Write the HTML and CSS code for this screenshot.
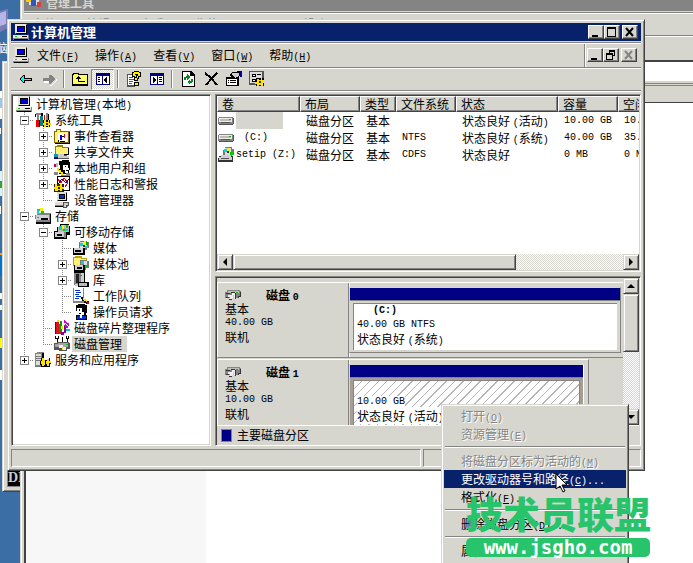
FILE: index.html
```html
<!DOCTYPE html>
<html lang="zh-CN">
<head>
    <meta charset="UTF-8">
    <meta name="viewport" content="width=device-width, initial-scale=1.0">
    <title>计算机管理</title>
    <link rel="stylesheet" href="styles.css">
</head>
<body>

    <!-- Icon set -->
    <svg class="defs" aria-hidden="true">
        <symbol id="i-computer" viewBox="0 0 16 16">
            <path fill="#848484" d="M2 0h12v10H2zM0 11h16v5H0z"/><path fill="#e7e7de" d="M2 0h11v9H2zM0 11h15v3H0z"/>
            <path fill="#000" d="M4 2h8v6H4zM13 1h1v9H3v-1h10zM1 15h14v1H1zM9 12h5v1H9z"/><path fill="#0000e8" d="M5 3h6v4H5z"/><path fill="#0c0" d="M2 12h2v1H2z"/>
        </symbol>
        <symbol id="i-tools" viewBox="0 0 16 16">
            <path fill="#848484" d="M1 1h5v2H1zM2 3h2v5H2zM11 1h2v7h-2z"/><path fill="#000" d="M0 2h1v3H0zM6 1h2v4H6zM13 2h1v6h-1v1H9V8h4z"/>
            <path fill="#008484" d="M5 4h3v10H5z"/><path fill="#e00" d="M1 8h3v7H1zM9 3h1v5H9z"/><path fill="#000" d="M4 8h1v7H4zM8 8h7v7H8z"/><path fill="#ffe000" d="M9 8h2v2h2V8h1v3h2v2h-2v2h-1v-1h-2v1H9v-2H8v-2h1z"/><path fill="#333" d="M11 11h2v2h-2z"/>
        </symbol>
        <symbol id="i-events" viewBox="0 0 16 16">
            <path fill="#846b00" d="M0 3h2V1h5v2h9v12H0z"/><path fill="#ffef73" d="M1 4h2V2h3v2h8v10H1z"/><path fill="#000" d="M15 4h1v12H1v-1h14z"/>
            <path fill="#fff" d="M4 5h9v9H4z"/><path fill="#00f" d="M6 7h2v5H6z"/><path fill="#e00" d="M10 6h1v4h-1z"/><path fill="#000" d="M4 12h1v2H4zM8 8h2v1H8zM6 13h5v1H6z"/>
        </symbol>
        <symbol id="i-share" viewBox="0 0 16 16">
            <path fill="#948400" d="M1 2h2V1h6v2h6v8H1z"/><path fill="#ffef73" d="M2 3h6v1h6v6H2z"/><path fill="#000" d="M14 4h1v7H6v-1h8z"/>
            <path fill="#009cb0" d="M0 10h4v4H0z"/><path fill="#000084" d="M0 13h4v2H0z"/><path fill="#ccc" d="M4 10h6v2h5v2H4z"/><path fill="#555" d="M4 14h11v1H4zM10 11h3v1h-3z"/>
        </symbol>
        <symbol id="i-users" viewBox="0 0 16 16">
            <path fill="#000" d="M5 1h3V0h7v2h1v8h-1v4H5V9h1V5H5z"/><path fill="#fff" d="M9 5h5v3h1v2h-1v3h-3v-3H9z"/><path fill="#000" d="M11 6h1v1h-1zM12 10h2v1h-2z"/>
            <path fill="#c00060" d="M0 4h2v3H0z"/><path fill="#bbb" d="M2 3h2v4H2z"/><path fill="#ffe000" d="M3 8h2v2h2v2h2v3H7v-2H5v-2H3z"/><path fill="#848484" d="M0 12h4v3H0zM12 13h4v3H7v-1h5z"/>
        </symbol>
        <symbol id="i-perf" viewBox="0 0 16 16">
            <path fill="#000" d="M3 0h13v15H3z"/><path fill="#fff" d="M4 1h11v13H4z"/><path fill="none" stroke="#e00" d="M4 3l3 4 3-5 4 5M11 11l3-4"/><path fill="none" stroke="#00c" d="M4 8l4-5 4 4 3-4"/>
            <path fill="#222" d="M0 8h10v8H0z"/><path fill="#ffe000" d="M1 8h2v2h3V8h2v3h2v2H8v2H6v-1H4v1H1v-2H0v-2h1z"/><path fill="#222" d="M4 11h2v2H4z"/>
        </symbol>
        <symbol id="i-device" viewBox="0 0 16 16">
            <path fill="#848484" d="M3 0h10v9H3zM1 10h13v5H1z"/><path fill="#deded6" d="M3 0h9v8H3zM1 10h12v3H1z"/><path fill="#000" d="M5 2h6v5H5zM12 1h1v8H4V8h8zM1 14h12v1H1z"/><path fill="#0031ce" d="M6 3h4v3H6z"/>
            <path fill="#555" d="M9 10h6v4h-2v2H9z"/><path fill="#ccc" d="M10 11h4v2h-2v2h-2z"/>
        </symbol>
        <symbol id="i-storage" viewBox="0 0 16 16">
            <path fill="#848484" d="M0 7h2V5h14v10H1z"/><path fill="#ceced6" d="M1 7h13v5H1z"/><path fill="#000" d="M1 14h14V6h1v10H1zM6 10h7v2H6z"/>
            <path fill="#848484" d="M2 1h6v5H2z"/><path fill="#00d8d8" d="M2 2h3v4H2z"/><path fill="#ffef00" d="M5 0h3v4H5z"/><path fill="#0c0" d="M6 3h3v3H6zM2 9h2v1H2z"/><path fill="#fff" d="M4 3h2v2H4z"/>
        </symbol>
        <symbol id="i-removable" viewBox="0 0 16 16">
            <path fill="#000" d="M0 7h3V3h3V0h9v2h1v9h-3v4H0z"/><path fill="#bbb" d="M4 3h3V1h8v7H4z"/><path fill="#00d8d8" d="M5 2h3v4H5zM11 5h3v2h-3z"/><path fill="#ffef00" d="M8 1h2v4H8z"/><path fill="#0c0" d="M9 5h2v2H9zM12 1h2v3h-2z"/>
            <path fill="#ceced6" d="M1 8h9v5H1z"/><path fill="#000" d="M3 10h5v2H3z"/><path fill="#848484" d="M10 8h2v6h-2z"/>
        </symbol>
        <symbol id="i-media" viewBox="0 0 16 16">
            <path fill="#777" d="M7 1h7v1h2v6h-2v2H6V2h1z"/><path fill="#ddd" d="M7 2h7v6H7z"/><path fill="#00d8d8" d="M7 3h3v3H7zM12 6h3v2h-3z"/><path fill="#ffef00" d="M11 1h2v4h-2z"/><path fill="#0a0" d="M13 2h2v3h-2z"/><path fill="#333" d="M10 5h2v2h-2z"/>
            <path fill="#000" d="M0 8h12v7H0z"/><path fill="#ceced6" d="M1 8h9v5H1z"/><path fill="#000" d="M2 10h6v2H2z"/>
        </symbol>
        <symbol id="i-pool" viewBox="0 0 16 16">
            <path fill="#b5a500" d="M0 1h2V0h7v2h5v8H0z"/><path fill="#ffef73" d="M1 2h7v1h5v6H1z"/><path fill="#777" d="M7 4h7v1h2v7h-3v2H7z"/><path fill="#00d8d8" d="M8 5h3v3H8z"/><path fill="#0c0" d="M12 9h3v3h-3z"/><path fill="#ddd" d="M11 5h3v4h-3z"/>
            <path fill="#000" d="M1 9h11v7H1z"/><path fill="#ceced6" d="M2 9h8v5H2z"/><path fill="#000" d="M4 11h5v2H4z"/>
        </symbol>
        <symbol id="i-library" viewBox="0 0 16 16">
            <path fill="#000" d="M1 0h11v13H1z"/><path fill="#848484" d="M1 1h7v12H1z"/><path fill="#222" d="M3 2h3v9H3z"/><path fill="#ceced6" d="M8 1h3v11H8zM2 12h6v2H2z"/><path fill="#0a0" d="M7 3h2v1H7z"/>
            <path fill="#000" d="M5 10h11v5H5z"/><path fill="#bbb" d="M6 11h8v3H6z"/>
        </symbol>
        <symbol id="i-queue" viewBox="0 0 16 16">
            <path fill="#848484" d="M0 0h11v15H0z"/><path fill="#fff" d="M1 0h9v13H1z"/><path fill="#0031ce" d="M2 2h5v1H2zM3 4h5v1H3zM2 6h4v1H2zM3 8h5v1H3zM2 10h4v1H2z"/><path fill="#000" d="M8 9h2v1h1v1h2v1h1v1h2v3h-3v-1h-2v-2H9v-2H8z"/><path fill="#ffe000" d="M10 10h1v1h2v1h1v2h-1v-1h-2v-1h-1z"/><path fill="#e00" d="M14 14h2v2h-2z"/>
        </symbol>
        <symbol id="i-operator" viewBox="0 0 16 16">
            <path fill="#000" d="M3 1h2V0h7v1h2v8h-1v2h1v5H3v-5h2V7H3z"/><path fill="#fff" d="M4 4h5v4h2v3H5V8H4z"/><path fill="#000" d="M6 5h1v2H6zM6 9h2v1H6z"/><path fill="#0031ce" d="M4 12h9v3H4z"/><path fill="#fff" d="M7 11h2v3H7z"/>
        </symbol>
        <symbol id="i-defrag" viewBox="0 0 16 16">
            <path fill="#840000" d="M1 2h4v12H1z"/><path fill="#e01020" d="M2 2h3v9H2zM2 11h5v3H2z"/><path fill="#00a000" d="M5 4h3v8H5zM6 1h2v3H6z"/><path fill="#ffe000" d="M7 6h2v3H7zM3 0h2v2H3z"/><path fill="#00c6ce" d="M12 9h4v2h-4z"/><path fill="#8000a0" d="M10 6h2v7h-2zM7 12h3v3H7z"/><path fill="none" stroke="#d000d0" stroke-width="2" d="M10 1l5 4M11 5l3 3"/>
        </symbol>
        <symbol id="i-diskmgmt" viewBox="0 0 16 16">
            <path fill="#000" d="M1 0h1v2h2V0h1v3H4v3H3V3H1zM8 1h1v5H8zM12 0h1v2h1V0h1v3h-1v3h-1V3h-1z"/><path fill="#555" d="M0 7h3V6h12v1h1v6h-3v2H5v-1H0z"/><path fill="#a5a5a5" d="M1 8h3V7h10v4H1z"/><path fill="#eee" d="M5 9h4v2h3v3H8v-2H5z"/><path fill="#ffe000" d="M8 11h1v3H8z"/><path fill="#0c0" d="M12 8h2v1h-2z"/>
        </symbol>
        <symbol id="i-services" viewBox="0 0 16 16">
            <path fill="#848484" d="M0 1h2V0h7v14H0z"/><path fill="#deded6" d="M1 2h5v11H1z"/><path fill="#777" d="M1 4h5v1H1zM1 6h5v1H1zM1 8h5v1H1zM0 14h9v1H0z"/><path fill="#000" d="M7 1h2v14H7zM6 6h3v2h5V6h1v3h1v3h-1v3h-9v-2H5V9h1z"/><path fill="#ffe000" d="M7 6h2v2h1v5H9v1H7v-2H6V9h1zM12 7h2v2h2v2h-2v3h-2v-2h-1V9h1z"/>
        </symbol>
        <symbol id="i-drive" viewBox="0 0 16 16">
            <path fill="#848484" d="M1 4h14v1h1v6h-1v1H1v-1H0V5h1z"/><path fill="#efefe7" d="M1 5h13v4H1z"/><path fill="#bdbdb5" d="M2 6h11v2H2z"/><path fill="#555" d="M15 5h1v6h-1v1H1v-1h14zM3 9h9v1H3z"/><path fill="#0b0" d="M11 6h2v1h-2z"/>
        </symbol>
        <symbol id="i-cd" viewBox="0 0 16 16">
            <path fill="#777" d="M7 0h7v2h2v6h-2v2H7V8H5V3h2z"/><path fill="#ddd" d="M7 1h6v7H7z"/><path fill="#00d8d8" d="M6 2h3v3H6z"/><path fill="#ffef00" d="M9 1h3v3H9z"/><path fill="#0c0" d="M12 5h3v3h-3z"/><path fill="#333" d="M9 4h2v2H9z"/>
            <path fill="#333" d="M1 9h14v6H0v-4h1z"/><path fill="#ceced6" d="M1 10h13v3H1zM3 8h10v2H3z"/><path fill="#555" d="M3 11h8v1H3z"/>
        </symbol>
        <symbol id="i-disk" viewBox="0 0 16 16">
            <path fill="#848484" d="M2 3h13v1h1v6h-2v1H0V5h2z"/><path fill="#bdbdb5" d="M3 4h11v2H3z"/><path fill="#333" d="M1 6h4v1H1zM15 5h1v5h-2v1h-1V9h2zM1 10h3v1H1z"/><path fill="#eee" d="M3 8h4V6h3v5H7v2H5v-3H3z"/><path fill="#333" d="M6 5h4v1H6zM10 6h1v6h-1zM4 12h3v1H4z"/><path fill="#ffe000" d="M8 8h1v4H8z"/><path fill="#0c0" d="M11 5h2v1h-2z"/>
        </symbol>
        <symbol id="i-back" viewBox="0 0 16 16"><path fill="#000" d="M1 8h1V7h1V6h1V5h1V4h2v3h7v3H7v2H5v-1H4v-1H3V9H2V8z"/><path fill="#00ffff" d="M2 8h1V7h1V6h1V5h1v3h7v1H6v2H5v-1H4V9H3V8z"/></symbol>
        <symbol id="i-forward" viewBox="0 0 16 16"><path fill="#fff" d="M3 8h6v6h2v-1l4-4V8l1 1-5 6H9v-3H3z"/><path fill="#848484" d="M2 7h6V4h2l4 4-4 5H8v-3H2z"/></symbol>
        <symbol id="i-up" viewBox="0 0 16 16"><path fill="#000" d="M0 3h1V2h6v1h9v12H0z"/><path fill="#ffff5a" d="M1 4h1V3h4v1h9v9H1z"/><path fill="#000" d="M4 7h1V6h1V5h1v1h1v1h1v1H7v2h6v1H6V8H4z"/></symbol>
        <symbol id="i-panel" viewBox="0 0 16 16"><path fill="#000084" d="M1 2h14v12H1z"/><path fill="#fff" d="M2 5h5v8H2zM8 5h6v8H8z"/><path fill="#000" d="M3 6h2v1H3zM3 8h2v1H3zM3 10h2v1H3zM11 6h1v6h-1v-1h-1v-1H9V8h1V7h1z"/></symbol>
        <symbol id="i-panel2" viewBox="0 0 16 16"><path fill="#000084" d="M1 2h14v12H1z"/><path fill="#fff" d="M2 5h6v8H2zM9 5h5v8H9z"/><path fill="#000" d="M10 6h3v1h-3zM10 8h3v1h-3zM10 10h3v1h-3zM4 6h1v1h1v1h1v2H6v1H5v1H4z"/></symbol>
        <symbol id="i-help" viewBox="0 0 16 16"><path fill="#555" d="M1 3h8v13H1z"/><path fill="#fff" d="M2 4h7v10H2z"/><path fill="#555" d="M3 6h4v1H3zM3 8h5v1H3zM3 10h4v1H3zM3 12h3v1H3z"/><path fill="#000" d="M6 1h2V0h5v1h2v5h-2v2h-1v2H8V6h2V4H9v2H6zM8 11h5v4H8z"/><path fill="#ffef00" d="M7 2h1V1h5v1h1v3h-2v2h-1v2H9V7h2V5h1V3H9v2H7zM9 12h3v2H9z"/></symbol>
        <symbol id="i-refresh" viewBox="0 0 16 16"><path fill="#000" d="M2 0h9l4 4v12H2z"/><path fill="#fff" d="M3 1h7v4h4v10H3z"/><path fill="#000" d="M10 1h1v3h3v1h-4z"/><path fill="#008c18" d="M4 6h2V5h1V3l3 3-3 3V7H6v2H4zM11 8h2v3h-1v1h-2v2l-3-3 3-3v2h1z"/></symbol>
        <symbol id="i-delete" viewBox="0 0 16 16"><path fill="none" stroke="#000" stroke-width="2" d="M2 2l6 5 6 7M14 2L9 7l-6 7"/></symbol>
        <symbol id="i-props" viewBox="0 0 16 16"><path fill="#000" d="M0 6h13v9H0zM3 4l4-3 7-1v5l-5 3z"/><path fill="#fff" d="M1 8h10v6H1z"/><path fill="#000" d="M2 9h1v1H2zM4 9h6v1H4zM2 11h1v1H2zM4 11h6v1H4zM3 7l3-3 3 3z"/><path fill="#ccc" d="M6 2h7v3l-4 2-2-2z"/><path fill="#0000a0" d="M14 0h2v6h-2z"/></symbol>
        <symbol id="i-snapin" viewBox="0 0 16 16"><path fill="#555" d="M0 0h15v14H0z"/><path fill="#ddd" d="M1 1h12v11H1z"/><path fill="#000" d="M3 3h4v3H3zM3 8h4v3H3zM8 3h4v1H8zM7 7h8v8H7z"/><path fill="#fff" d="M4 4h2v1H4zM4 9h2v1H4z"/><path fill="#ffe000" d="M8 8h2v1h2V7h1v2h2v3h-1v3h-2v-1h-2v1H8v-2H6v-2h2z"/><path fill="#333" d="M10 10h2v2h-2z"/></symbol>
        <symbol id="i-min" viewBox="0 0 12 10"><path fill="#000" d="M2 8h6v2H2z"/></symbol>
        <symbol id="i-max" viewBox="0 0 12 10"><path fill="#000" fill-rule="evenodd" d="M1 0h9v10H1zM2 2v7h7V2z"/></symbol>
        <symbol id="i-restore" viewBox="0 0 12 10"><path fill="#000" fill-rule="evenodd" d="M4 0h6v6H8v4H1V3h3zM5 2v1h3v2h1V2zM2 5v4h5V5z"/></symbol>
        <symbol id="i-close" viewBox="0 0 12 10"><path fill="none" stroke="currentColor" stroke-width="2" d="M2 1l7 8M9 1L2 9"/></symbol>
    </svg>

    <!-- Desktop shortcuts behind the windows -->
    <div class="desktop">
        <svg class="desktop-art" width="10" height="400" aria-hidden="true">
            <path fill="#7b7bb5" d="M0 11l8-2v19l-8 4z"/><path fill="#b5b5e7" d="M0 13l6-2v13l-6 2z"/>
            <path fill="#fff" d="M0 91h2v28H0z"/><path fill="#9cc6ef" d="M0 98h2v10H0z"/><path fill="#d8f4ff" d="M0 171h2v25H0z"/><path fill="#31a531" d="M0 181h2v7H0z"/>
            <path fill="#0073ce" d="M0 256h2v20H0z"/><path fill="#ff9c00" d="M0 253h2v2H0z"/><path fill="#ffff00" d="M0 338h3v10H0z"/><path fill="#fff" d="M0 128h1v6H0zM0 206h1v8H0zM0 293h2v6H0zM0 305h2v5H0zM0 370h2v10H0z"/>
        </svg>
        <span class="desktop-label">电脑</span>
    </div>

    <div class="window console-window">
        <div class="console-body">DI</div>
    </div>

    <div class="window explorer-window">
        <div class="explorer-title">
            <svg width="16" height="16" aria-hidden="true"><path fill="#dedede" d="M3 0h10v10H3z"/><path fill="#fc0" d="M0 3h5v4H0z"/><path fill="#3058b8" d="M5 2h5v9H5z"/><path fill="#c44" d="M11 7h4v5h-4z"/></svg>
            管理工具
        </div>
        <div class="explorer-menu"><span>文件</span><span>编辑</span><span>查看</span><span>收藏</span><span>工具</span><span>帮助</span></div>
        <div class="explorer-tools"></div>
        <div class="explorer-address"></div>
        <div class="explorer-columns"></div>
        <div class="explorer-content"><div class="explorer-side"></div></div>
    </div>

    <!-- Computer management window -->
    <div class="window main-window">
        <div class="title-bar">
            <svg class="icon"><use href="#i-computer"/></svg>
            <h1>计算机管理</h1>
            <button class="win-button" aria-label="最小化"><svg><use href="#i-min"/></svg></button>
            <button class="win-button" aria-label="最大化"><svg><use href="#i-max"/></svg></button>
            <button class="win-button close" aria-label="关闭"><svg><use href="#i-close"/></svg></button>
        </div>

        <div class="menu-bar">
            <svg class="icon"><use href="#i-computer"/></svg>
            <nav class="menus">
                <button>文件<span class="en">(<u>F</u>)</span></button>
                <button>操作<span class="en">(<u>A</u>)</span></button>
                <button>查看<span class="en">(<u>V</u>)</span></button>
                <button>窗口<span class="en">(<u>W</u>)</span></button>
                <button>帮助<span class="en">(<u>H</u>)</span></button>
            </nav>
            <div class="child-buttons">
                <button class="win-button" aria-label="最小化子窗口"><svg><use href="#i-min"/></svg></button>
                <button class="win-button" aria-label="还原子窗口"><svg><use href="#i-restore"/></svg></button>
                <button class="win-button close" aria-label="关闭子窗口" disabled><svg><use href="#i-close"/></svg></button>
            </div>
        </div>

        <div class="tool-bar">
            <button aria-label="后退"><svg class="icon"><use href="#i-back"/></svg></button>
            <button aria-label="前进" disabled><svg class="icon"><use href="#i-forward"/></svg></button>
            <span class="divider"></span>
            <button aria-label="向上"><svg class="icon"><use href="#i-up"/></svg></button>
            <button class="pressed" aria-label="显示控制台树"><svg class="icon"><use href="#i-panel"/></svg></button>
            <span class="divider"></span>
            <button aria-label="帮助"><svg class="icon"><use href="#i-help"/></svg></button>
            <button aria-label="显示操作窗格"><svg class="icon"><use href="#i-panel2"/></svg></button>
            <span class="divider"></span>
            <button aria-label="刷新"><svg class="icon"><use href="#i-refresh"/></svg></button>
            <button aria-label="删除"><svg class="icon"><use href="#i-delete"/></svg></button>
            <button aria-label="属性"><svg class="icon"><use href="#i-props"/></svg></button>
            <button aria-label="设置"><svg class="icon"><use href="#i-snapin"/></svg></button>
        </div>

        <div class="panes">
            <ul class="tree sunken">
                <li><svg class="icon"><use href="#i-computer"/></svg><span>计算机管理<span class="en">(</span>本地<span class="en">)</span></span></li>
                <li><i class="tee"><button class="minus" aria-label="折叠"></button></i><svg class="icon"><use href="#i-tools"/></svg><span>系统工具</span></li>
                <li><i class="line"></i><i class="tee"><button class="plus" aria-label="展开"></button></i><svg class="icon"><use href="#i-events"/></svg><span>事件查看器</span></li>
                <li><i class="line"></i><i class="tee"><button class="plus" aria-label="展开"></button></i><svg class="icon"><use href="#i-share"/></svg><span>共享文件夹</span></li>
                <li><i class="line"></i><i class="tee"><button class="plus" aria-label="展开"></button></i><svg class="icon"><use href="#i-users"/></svg><span>本地用户和组</span></li>
                <li><i class="line"></i><i class="tee"><button class="plus" aria-label="展开"></button></i><svg class="icon"><use href="#i-perf"/></svg><span>性能日志和警报</span></li>
                <li><i class="line"></i><i class="end"></i><svg class="icon"><use href="#i-device"/></svg><span>设备管理器</span></li>
                <li><i class="tee"><button class="minus" aria-label="折叠"></button></i><svg class="icon"><use href="#i-storage"/></svg><span>存储</span></li>
                <li><i class="line"></i><i class="tee"><button class="minus" aria-label="折叠"></button></i><svg class="icon"><use href="#i-removable"/></svg><span>可移动存储</span></li>
                <li><i class="line"></i><i class="line"></i><i class="tee"></i><svg class="icon"><use href="#i-media"/></svg><span>媒体</span></li>
                <li><i class="line"></i><i class="line"></i><i class="tee"><button class="plus" aria-label="展开"></button></i><svg class="icon"><use href="#i-pool"/></svg><span>媒体池</span></li>
                <li><i class="line"></i><i class="line"></i><i class="tee"><button class="plus" aria-label="展开"></button></i><svg class="icon"><use href="#i-library"/></svg><span>库</span></li>
                <li><i class="line"></i><i class="line"></i><i class="tee"></i><svg class="icon"><use href="#i-queue"/></svg><span>工作队列</span></li>
                <li><i class="line"></i><i class="line"></i><i class="end"></i><svg class="icon"><use href="#i-operator"/></svg><span>操作员请求</span></li>
                <li><i class="line"></i><i class="tee"></i><svg class="icon"><use href="#i-defrag"/></svg><span>磁盘碎片整理程序</span></li>
                <li><i class="line"></i><i class="end"></i><svg class="icon"><use href="#i-diskmgmt"/></svg><span class="selected">磁盘管理</span></li>
                <li><i class="end"><button class="plus" aria-label="展开"></button></i><svg class="icon"><use href="#i-services"/></svg><span>服务和应用程序</span></li>
            </ul>

            <div class="details">
                <div class="volumes sunken">
                    <div class="volume-list">
                        <table>
                            <colgroup><col class="c-name"><col class="c-layout"><col class="c-type"><col class="c-fs"><col class="c-status"><col class="c-size"><col class="c-free"></colgroup>
                            <thead>
                                <tr><th>卷</th><th>布局</th><th>类型</th><th>文件系统</th><th>状态</th><th>容量</th><th>空闲空间</th></tr>
                            </thead>
                            <tbody>
                                <tr><td><div class="name"><svg class="icon"><use href="#i-drive"/></svg><span class="blank"></span></div></td><td>磁盘分区</td><td>基本</td><td></td><td>状态良好 <span class="en">(</span>活动<span class="en">)</span></td><td class="en">10.00 GB</td><td class="en">10.00 GB</td></tr>
                                <tr><td><div class="name"><svg class="icon"><use href="#i-drive"/></svg><span class="en letter">(C:)</span></div></td><td>磁盘分区</td><td>基本</td><td class="en">NTFS</td><td>状态良好 <span class="en">(</span>系统<span class="en">)</span></td><td class="en">40.00 GB</td><td class="en">35.20 GB</td></tr>
                                <tr><td><div class="name"><svg class="icon"><use href="#i-cd"/></svg><span class="en">setip (Z:)</span></div></td><td>磁盘分区</td><td>基本</td><td class="en">CDFS</td><td>状态良好</td><td class="en">0 MB</td><td class="en">0 MB</td></tr>
                            </tbody>
                        </table>
                    </div>
                    <div class="scroll horizontal">
                        <button class="left" aria-label="向左滚动"></button>
                        <div class="thumb"></div>
                        <div class="track"></div>
                        <button class="right" aria-label="向右滚动"></button>
                    </div>
                </div>

                <div class="disks sunken">
                    <div class="disk-area">
                        <div class="disk-list">
                            <section class="disk">
                                <div class="disk-info">
                                    <h2><svg class="icon"><use href="#i-disk"/></svg><span>磁盘 <span class="en">0</span></span></h2>
                                    <p>基本</p>
                                    <p class="en">40.00 GB</p>
                                    <p>联机</p>
                                </div>
                                <div class="partition">
                                    <div class="bar"></div>
                                    <div class="box">
                                        <p class="en drive">(C:)</p>
                                        <p class="en">40.00 GB NTFS</p>
                                        <p>状态良好 <span class="en">(</span>系统<span class="en">)</span></p>
                                    </div>
                                </div>
                            </section>
                            <section class="disk small">
                                <div class="disk-info">
                                    <h2><svg class="icon"><use href="#i-disk"/></svg><span>磁盘 <span class="en">1</span></span></h2>
                                    <p>基本</p>
                                    <p class="en">10.00 GB</p>
                                    <p>联机</p>
                                </div>
                                <div class="partition current">
                                    <div class="bar"></div>
                                    <div class="box">
                                        <p class="drive"></p>
                                        <p class="en"><span>10.00 GB</span></p>
                                        <p><span>状态良好 <span class="en">(</span>活动<span class="en">)</span></span></p>
                                    </div>
                                </div>
                            </section>
                        </div>
                        <div class="scroll vertical">
                            <button class="up" aria-label="向上滚动"></button>
                            <div class="thumb"></div>
                            <div class="track"></div>
                            <button class="down" aria-label="向下滚动"></button>
                        </div>
                    </div>
                    <div class="legend"><span class="swatch"></span>主要磁盘分区</div>
                </div>
            </div>
        </div>

        <div class="status-bar"><span></span><span></span><span></span></div>
    </div>

    <!-- Context menu of the selected partition -->
    <div class="context-menu" role="menu">
        <button role="menuitem" disabled>打开<span class="en">(<u>O</u>)</span></button>
        <button role="menuitem" disabled>资源管理<span class="en">(<u>E</u>)</span></button>
        <hr>
        <button role="menuitem" disabled>将磁盘分区标为活动的<span class="en">(<u>M</u>)</span></button>
        <button role="menuitem" class="active">更改驱动器号和路径<span class="en">(<u>C</u>)...</span></button>
        <button role="menuitem">格式化<span class="en">(<u>F</u>)...</span></button>
        <hr>
        <button role="menuitem">删除磁盘分区<span class="en">(<u>D</u>)...</span></button>
        <hr>
        <button role="menuitem">属性</button>
    </div>

    <svg class="pointer" width="13" height="20" viewBox="0 0 13 20" aria-hidden="true"><path fill="#fff" stroke="#000" d="M1 1v15l4-3 3 6 2-1-3-6h5z"/></svg>

    <div class="watermark">
        <strong>技术员联盟</strong>
        <span>www.jsgho.com</span>
    </div>

</body>
</html>
```

FILE: styles.css
```css
* {
    box-sizing: border-box;
}
body {
    margin: 0;
    height: 100vh;
    position: relative;
    overflow: hidden;
    background-color: #3a6ea5;
    color: #000;
    font: 12px/16px "Noto Sans CJK SC", sans-serif;
}
button {
    padding: 0;
    border: none;
    background: none;
    color: inherit;
    font: inherit;
}
h1, h2, p, ul {
    margin: 0;
    padding: 0;
}
.defs {
    position: absolute;
    width: 0;
    height: 0;
}
.icon {
    flex: none;
    width: 16px;
    height: 16px;
    shape-rendering: crispEdges;
}
.en {
    font-family: "Liberation Mono", monospace;
    font-size: 10px;
    line-height: 10px;
}

/* Desktop */
.desktop-art {
    position: absolute;
    left: 0;
    top: 0;
}
.desktop-label {
    position: absolute;
    right: calc(100% - 8px);
    top: 40px;
    color: #fff;
    white-space: nowrap;
}

/* Windows */
.window {
    position: absolute;
    background: #d6d6ce;
    border: 1px solid #d6d6ce;
    border-right-color: #424242;
    border-bottom-color: #424242;
    box-shadow: inset 1px 1px #fff, inset -1px -1px #848484;
    padding: 3px;
}
.console-window {
    left: 2px;
    top: 61px;
    width: 300px;
    height: 431px;
    padding: 4px;
}
.console-body {
    display: flex;
    align-items: flex-end;
    height: 100%;
    background: #000;
    color: #ccc;
    border: 1px solid #848484;
    font: bold 14px/16px "Liberation Serif", serif;
}
.explorer-window {
    left: 20px;
    right: -20px;
    top: -10px;
    bottom: -20px;
    display: flex;
    flex-direction: column;
}
.explorer-title {
    display: flex;
    align-items: center;
    gap: 4px;
    height: 17px;
    padding-left: 2px;
    background: #848484;
    color: #d6d6ce;
    font-weight: bold;
}
.explorer-menu {
    display: flex;
    gap: 30px;
    height: 23px;
    margin-top: 1px;
    padding: 3px 8px;
    border-top: 1px solid #848484;
    box-shadow: inset 0 1px #fff;
    color: #848484;
}
.explorer-tools,
.explorer-address {
    height: 25px;
    border-top: 1px solid #848484;
    box-shadow: inset 0 1px #fff;
}
.explorer-address {
    height: 23px;
    background: #fff;
    border-top: 2px solid #424242;
    border-bottom: 2px solid #d6d6ce;
}
.explorer-columns {
    height: 20px;
    border-top: 3px double #848484;
    border-bottom: 1px solid #424242;
}
.explorer-content {
    flex: 1;
    background: #fff;
    border-left: 2px solid #424242;
}
.explorer-side {
    width: 180px;
    height: 100%;
    background: #f7f7f7;
}
.main-window {
    left: 7px;
    right: 48px;
    top: 19px;
}

/* Title bar and menus */
.title-bar {
    display: flex;
    align-items: center;
    height: 18px;
    padding: 0 3px 0 2px;
    background: #08216b;
    color: #fff;
}
.title-bar h1 {
    flex: 1;
    padding-left: 2px;
    font-size: 13px;
    line-height: 18px;
}
.win-button {
    width: 16px;
    height: 14px;
    padding: 1px;
    background: #d6d6ce;
    border: 1px solid #fff;
    border-right-color: #424242;
    border-bottom-color: #424242;
    box-shadow: inset -1px -1px #848484;
    color: #000;
}
.win-button svg {
    display: block;
    width: 12px;
    height: 10px;
}
.win-button.close {
    margin-left: 2px;
}
.win-button:disabled {
    color: #848484;
}
.menu-bar {
    display: flex;
    align-items: center;
    height: 25px;
    margin-top: 1px;
    padding-left: 2px;
    border-top: 1px solid #848484;
    box-shadow: inset 0 1px #fff;
}
.menus {
    display: flex;
    flex: 1;
    gap: 16px;
    padding-left: 8px;
}
.child-buttons {
    display: flex;
    align-items: center;
    height: 23px;
    padding: 0 4px 0 2px;
    border-left: 1px solid #848484;
    box-shadow: inset 1px 0 #fff;
}
.tool-bar {
    display: flex;
    align-items: center;
    height: 24px;
    margin-bottom: 3px;
    padding-left: 3px;
    border-top: 1px solid #848484;
    border-bottom: 1px solid #848484;
    box-shadow: inset 0 1px #fff, 0 1px #fff;
}
.tool-bar button {
    display: flex;
    align-items: center;
    justify-content: center;
    width: 23px;
    height: 21px;
}
.tool-bar .pressed {
    border: 1px solid #848484;
    border-right-color: #fff;
    border-bottom-color: #fff;
    background: repeating-conic-gradient(#fff 0 25%, #d6d6ce 0 50%) 0 0 / 2px 2px;
}
.divider {
    width: 2px;
    height: 18px;
    margin: 0 3px;
    border-left: 1px solid #848484;
    border-right: 1px solid #fff;
}

/* Panes */
.panes {
    display: grid;
    grid-template-columns: 200px minmax(0, 1fr);
    gap: 4px;
}
.sunken {
    background: #fff;
    border: 1px solid #848484;
    border-right-color: #fff;
    border-bottom-color: #fff;
    box-shadow: inset 1px 1px #424242, inset -1px -1px #d6d6ce;
    padding: 1px;
}
.tree {
    list-style: none;
    padding-left: 4px;
    white-space: nowrap;
}
.tree li {
    display: flex;
    height: 16px;
}
.tree li > span {
    margin-left: 2px;
    padding: 0 5px 0 2px;
}
.tree .selected {
    background: #d6d6ce;
}
.tree i {
    width: 19px;
    height: 16px;
    padding: 4px;
    background-repeat: no-repeat;
}
.line {
    background-image: repeating-linear-gradient(#848484 0 1px, transparent 1px 2px);
    background-size: 1px 16px;
    background-position: 8px 0;
}
.tee, .end {
    background-image: repeating-linear-gradient(#848484 0 1px, transparent 1px 2px), repeating-linear-gradient(90deg, #848484 0 1px, transparent 1px 2px);
    background-size: 1px 16px, 10px 1px;
    background-position: 8px 0, 8px 8px;
}
.end {
    background-size: 1px 8px, 10px 1px;
}
.tree button {
    display: block;
    width: 9px;
    height: 9px;
    border: 1px solid #848484;
    background: linear-gradient(#000, #000) 1px 3px / 5px 1px no-repeat, #fff;
}
.tree .plus {
    background: linear-gradient(#000, #000) 1px 3px / 5px 1px no-repeat, linear-gradient(#000, #000) 3px 1px / 1px 5px no-repeat, #fff;
}
.details {
    display: flex;
    flex-direction: column;
    gap: 4px;
}

/* Volume list */
.volume-list {
    height: 158px;
    overflow: hidden;
}
.volume-list table {
    width: 472px;
    table-layout: fixed;
    border-collapse: separate;
    border-spacing: 0;
    white-space: nowrap;
}
.volume-list th {
    height: 16px;
    padding: 0 4px;
    background: #d6d6ce;
    border: 1px solid #fff;
    border-right-color: #424242;
    border-bottom-color: #424242;
    box-shadow: inset -1px -1px #848484;
    font-weight: normal;
    line-height: 14px;
    text-align: left;
}
.volume-list td {
    height: 17px;
    padding: 0 0 0 6px;
    line-height: 16px;
    vertical-align: middle;
}
.volume-list td:first-child {
    padding-left: 1px;
}
.name {
    display: flex;
    align-items: center;
    gap: 2px;
    height: 17px;
}
.blank {
    width: 47px;
    height: 17px;
    background: #d6d6ce;
}
.letter {
    padding-left: 8px;
}
.c-name { width: 83px; }
.c-layout, .c-fs { width: 60px; }
.c-type { width: 36px; }
.c-status { width: 102px; }
.c-size { width: 60px; }
.c-free { width: 71px; }

/* Scroll bars */
.scroll {
    display: flex;
    background: #e9e9e4;
}
.scroll button,
.thumb {
    flex: none;
    width: 16px;
    height: 16px;
    background: #d6d6ce;
    border: 1px solid #d6d6ce;
    border-right-color: #424242;
    border-bottom-color: #424242;
    box-shadow: inset 1px 1px #fff, inset -1px -1px #848484;
}
.scroll button::before {
    content: "";
    display: block;
    width: 0;
    margin: auto;
    border: 4px solid transparent;
}
.scroll .left::before { border-width: 4px 4px 4px 0; border-right-color: #000; }
.scroll .right::before { border-width: 4px 0 4px 4px; border-left-color: #000; }
.scroll .up::before { border-width: 0 4px 4px; border-bottom-color: #000; }
.scroll .down::before { border-width: 4px 4px 0; border-top-color: #000; }
.track {
    flex: 1;
    background: repeating-conic-gradient(#fff 0 25%, #d6d6ce 0 50%) 0 0 / 2px 2px;
}
.horizontal .thumb {
    width: 67%;
}
.vertical {
    flex-direction: column;
}
.vertical .thumb {
    height: 58px;
}

/* Disk view */
.disks {
    background: #d6d6ce;
}
.disk-area {
    display: grid;
    grid-template-columns: minmax(0, 1fr) 16px;
    height: 147px;
}
.disk-list {
    overflow: hidden;
    padding-top: 4px;
    line-height: 14px;
}
.disk {
    display: grid;
    grid-template-columns: 131px minmax(0, 1fr);
    height: 76px;
    margin-bottom: 1px;
    border: 1px solid #fff;
    border-bottom-color: #848484;
    border-right: none;
}
.disk.small {
    margin-right: 34px;
    border-right: 1px solid #848484;
}
.disk p {
    height: 14px;
    line-height: 14px;
}
.disk-info {
    padding: 5px 0 0 7px;
    border-right: 1px solid #848484;
    box-shadow: 1px 0 #fff;
}
.disk-info h2 {
    display: flex;
    align-items: center;
    gap: 25px;
    height: 14px;
    font-size: 12px;
    line-height: 14px;
}
.partition {
    display: flex;
    flex-direction: column;
    margin: 4px 2px 4px 0;
    border: 1px solid #d6d6ce;
    border-right-color: #848484;
    border-bottom-color: #848484;
}
.bar {
    height: 13px;
    background: #000084;
    border-bottom: 1px solid #848484;
}
.box {
    flex: 1;
    margin: 2px 3px;
    padding-left: 3px;
    background: #fff;
    border: 1px solid #848484;
    border-right: none;
    border-bottom: none;
    white-space: nowrap;
}
.drive {
    padding-left: 16px;
    font-weight: bold;
}
.current {
    margin-bottom: 0;
    margin-right: 4px;
    background: #a59c94;
    border-right-color: #fff;
}
.current .box {
    margin-bottom: 0;
    background: repeating-linear-gradient(135deg, #fff 0 5px, #b5b5b5 5px 6px);
    border-right: 1px solid #848484;
}
.current .box p > span {
    background: #fff;
}
.legend {
    display: flex;
    align-items: center;
    gap: 5px;
    height: 19px;
    padding-left: 4px;
    border-top: 1px solid #fff;
}
.swatch {
    width: 11px;
    height: 13px;
    background: #000084;
    border: 1px solid #848484;
}

/* Status bar */
.status-bar {
    display: grid;
    grid-template-columns: 410px 1fr 1fr;
    gap: 2px;
    margin-top: 3px;
}
.status-bar span {
    height: 18px;
    border: 1px solid #848484;
    border-right-color: #fff;
    border-bottom-color: #fff;
}

/* Context menu */
.context-menu {
    position: absolute;
    left: 441px;
    top: 404px;
    width: 188px;
    padding: 2px 2px 8px;
    background: #d6d6ce;
    border: 1px solid #d6d6ce;
    border-right-color: #424242;
    border-bottom-color: #424242;
    box-shadow: inset 1px 1px #fff, inset -1px -1px #848484;
}
.context-menu button {
    display: block;
    width: 100%;
    height: 18px;
    padding-left: 17px;
    line-height: 18px;
    text-align: left;
    white-space: nowrap;
}
.context-menu button:disabled {
    color: #848484;
    text-shadow: 1px 1px #fff;
}
.context-menu .active {
    background: #08216b;
    color: #fff;
}
.context-menu hr {
    height: 2px;
    margin: 3px 1px 4px;
    border: none;
    border-top: 1px solid #848484;
    border-bottom: 1px solid #fff;
}
.pointer {
    position: absolute;
    left: 555px;
    top: 473px;
}

/* Site mark laid over the desktop */
.watermark {
    position: absolute;
    left: 466px;
    top: 494px;
    width: 184px;
    color: #27c46b;
    white-space: nowrap;
}
.watermark strong {
    display: block;
    height: 44px;
    font-size: 37px;
    font-weight: 900;
    line-height: 38px;
}
.watermark span {
    display: block;
    height: 19px;
    border-radius: 5px;
    background: #27c46b;
    color: #fff;
    font: bold 19px/18px "DejaVu Sans Mono", monospace;
    text-align: center;
}
```
